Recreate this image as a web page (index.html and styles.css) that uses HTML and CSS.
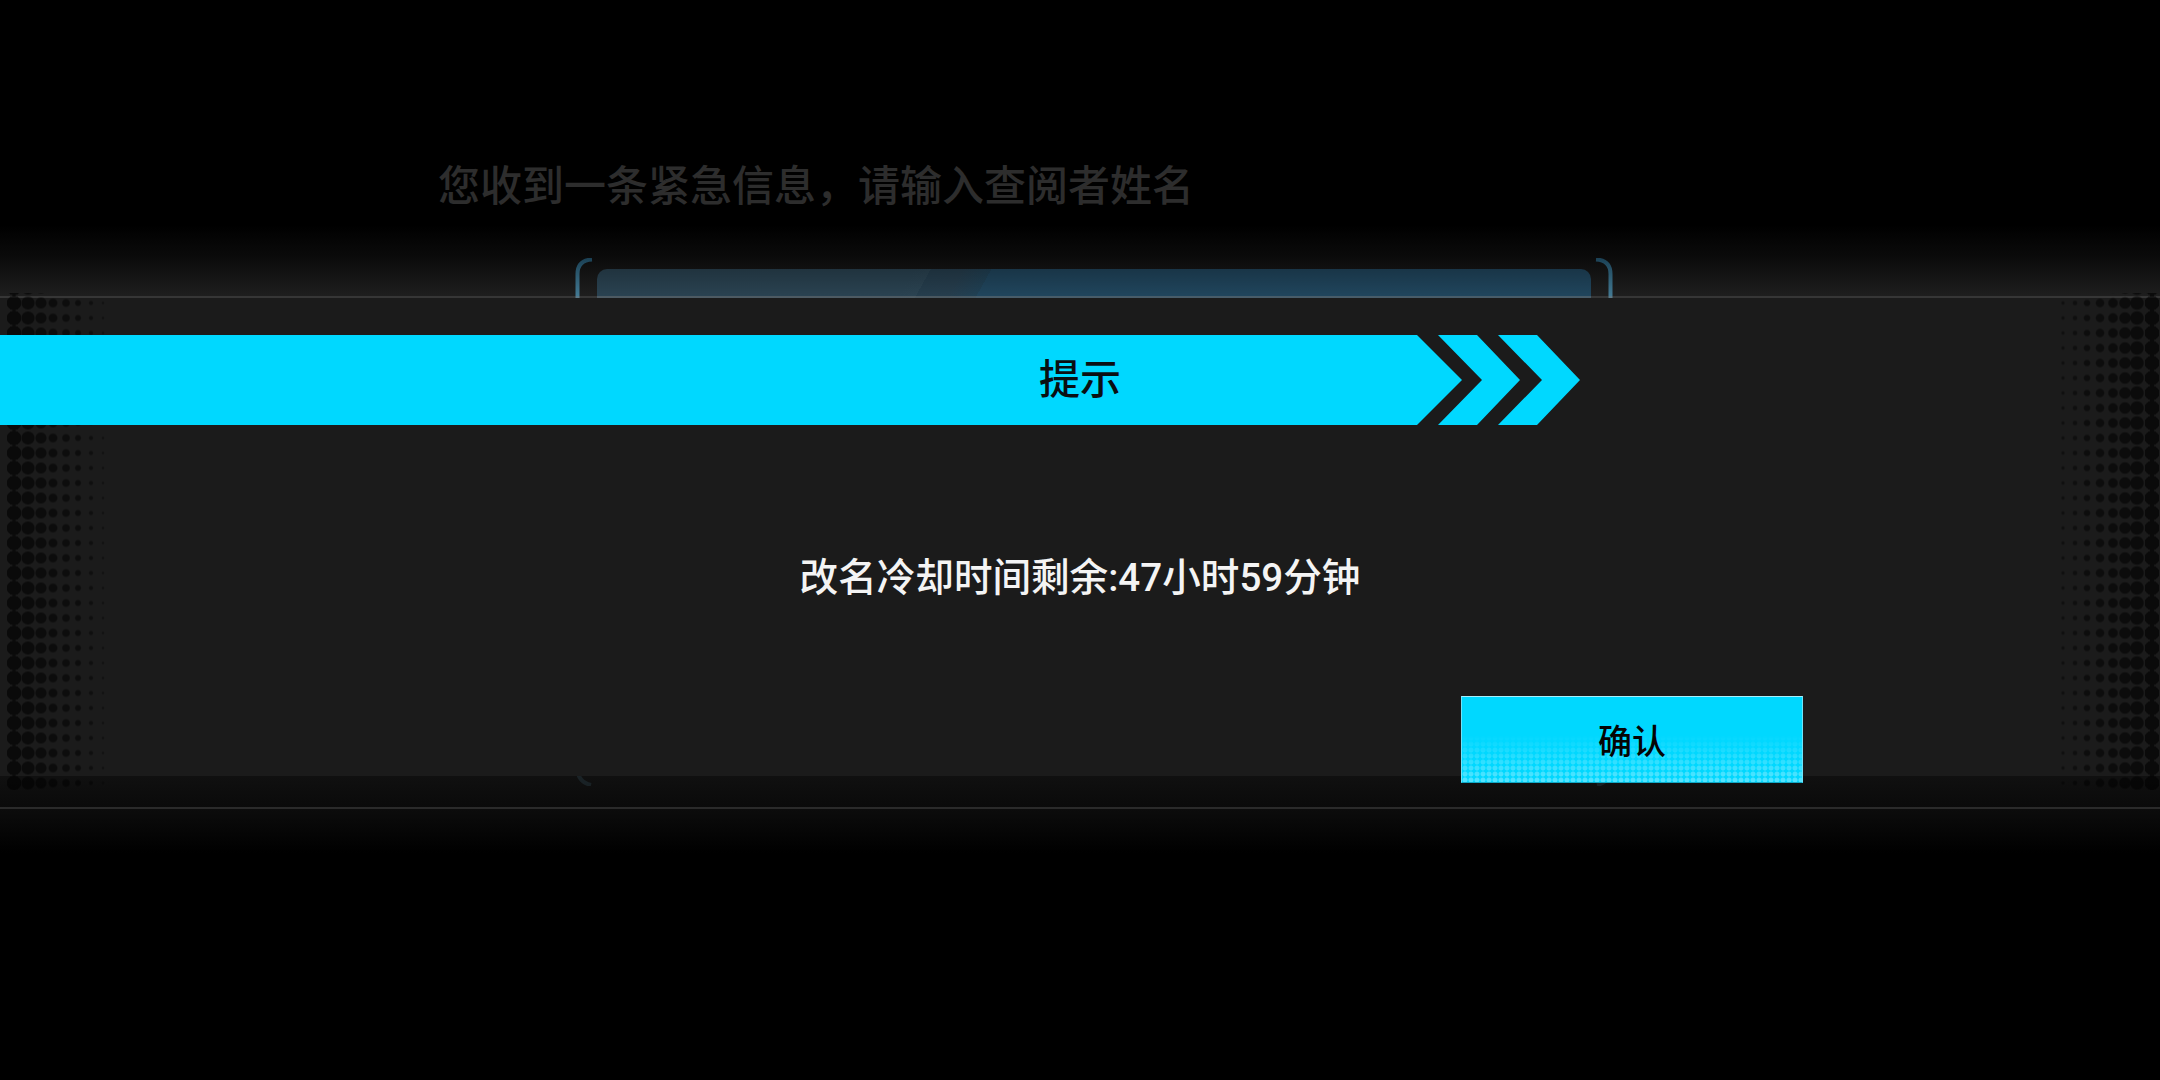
FILE: index.html
```html
<!DOCTYPE html>
<html lang="zh-CN">
<head>
    <meta charset="UTF-8">
    <meta name="viewport" content="width=device-width, initial-scale=1.0">
    <title>提示</title>
    <link rel="stylesheet" href="styles.css">
</head>
<body>
    <!-- 背后的页面 -->
    <div class="scene">
        <p class="scene-text">您收到一条紧急信息，请输入查阅者姓名</p>
        <div class="frame">
            <svg class="bracket" viewBox="0 0 22 528" aria-hidden="true">
                <defs>
                    <linearGradient id="bracketStroke" gradientUnits="userSpaceOnUse" x1="0" y1="0" x2="0" y2="40">
                        <stop offset="0" stop-color="#1b4155"/>
                        <stop offset="1" stop-color="#447c96"/>
                    </linearGradient>
                </defs>
                <path d="M17 1.5 C7 2 2.5 7 2.5 16 V510 C2.5 519 7 525 16 527" fill="none" stroke="url(#bracketStroke)" stroke-width="4"/>
            </svg>
            <div class="frame-screen"></div>
            <svg class="bracket bracket-right" viewBox="0 0 22 528" aria-hidden="true">
                <path d="M17 1.5 C7 2 2.5 7 2.5 16 V510 C2.5 519 7 525 16 527" fill="none" stroke="url(#bracketStroke)" stroke-width="4"/>
            </svg>
        </div>
    </div>

    <!-- 弹窗 -->
    <div class="dialog">
        <div class="dots dots-left"></div>
        <div class="dots dots-right"></div>
        <div class="dialog-panel">
            <div class="title-bar">
                <svg class="title-arrow" viewBox="0 0 1580 90" aria-hidden="true">
                    <polygon points="0,0 1417,0 1462,45 1417,90 0,90"/>
                    <polygon points="1438,0 1477,0 1520,45 1477,90 1438,90 1482,45"/>
                    <polygon points="1498,0 1537,0 1580,45 1537,90 1498,90 1542,45"/>
                </svg>
                <h1 class="title">提示</h1>
            </div>
            <p class="message">改名冷却时间剩余:47小时59分钟</p>
            <button class="confirm-button">确认</button>
        </div>
        <div class="dialog-foot"></div>
        <div class="dialog-fade"></div>
    </div>
</body>
</html>
```

FILE: styles.css
```css
* {
    margin: 0;
    padding: 0;
    box-sizing: border-box;
}

body {
    width: 2160px;
    height: 1080px;
    overflow: hidden;
    position: relative;
    font-family: Roboto, "Noto Sans CJK SC", sans-serif;
    background-color: #000;
    background-image: linear-gradient(180deg, #000 225px, #0b0b0b 258px, #1e1e1e 296px, #000 296px);
}

.scene {
    padding-top: 157px;
}

.scene-text {
    margin-left: 438px;
    font-size: 42px;
    line-height: 60px;
    font-weight: 500;
    color: #2d2d2d;
}

.frame {
    display: flex;
    width: 1038px;
    height: 528px;
    margin: 41px 0 0 575px;
}

.bracket {
    width: 22px;
    height: 528px;
    flex: none;
}

.bracket-right {
    transform: scaleX(-1);
}

.frame-screen {
    flex: 1;
    height: 500px;
    margin-top: 11px;
    border-radius: 10px 10px 0 0;
    background-image:
        linear-gradient(180deg, rgba(0, 0, 0, 0.25), rgba(0, 0, 0, 0) 30px),
        linear-gradient(119deg, #2b4453 277px, #2c4554 292px, #263f4f 292px, #273f4f 320px, #214256 345px, #21475f 345px);
}

/* 弹窗 */
.dialog {
    position: absolute;
    top: 296px;
    left: 0;
    right: 0;
}

.dialog-panel {
    display: flex;
    flex-direction: column;
    height: 480px;
    border-top: 2px solid rgba(120, 120, 120, 0.45);
    background-color: #1b1b1b;
    background-clip: padding-box;
}

.title-bar {
    position: relative;
    z-index: 2;
    display: flex;
    flex: none;
    justify-content: center;
    align-items: center;
    height: 90px;
    margin-top: 37px;
}

.title-arrow {
    position: absolute;
    top: 0;
    left: 0;
    width: 1580px;
    height: 90px;
    fill: #00d8ff;
}

.title {
    position: relative;
    font-size: 41px;
    line-height: 90px;
    font-weight: 500;
    color: #0a0f12;
}

.message {
    flex: none;
    margin-top: 129px;
    font-size: 38.6px;
    line-height: 48px;
    font-weight: 500;
    text-align: center;
    color: #f4f4f4;
}

.confirm-button {
    position: relative;
    z-index: 2;
    flex: none;
    align-self: flex-end;
    width: 342px;
    height: 87px;
    margin: 94px 357px 0 0;
    font-family: inherit;
    font-size: 34px;
    font-weight: 500;
    color: #050505;
    background-color: #00d8ff;
    border: 1px solid #6fe4fa;
    border-top-color: #a8effc;
    border-bottom-color: #0fa9c6;
    overflow: hidden;
}

.confirm-button::before {
    content: "";
    position: absolute;
    top: 38px;
    left: 0;
    right: 0;
    bottom: 0;
    z-index: -1;
    background-image: radial-gradient(circle at 3px 3px, #bff4ff 2px, rgba(191, 244, 255, 0) 3px);
    background-size: 6px 6px;
    -webkit-mask-image: linear-gradient(180deg, transparent, rgba(0, 0, 0, 0.45));
    mask-image: linear-gradient(180deg, transparent, rgba(0, 0, 0, 0.45));
}

.dialog-foot {
    height: 33px;
    border-bottom: 2px solid #2a2a2a;
    background-image: linear-gradient(180deg, rgba(19, 19, 19, 0.85), rgba(12, 12, 12, 0.85));
    background-clip: padding-box;
}

.dialog-fade {
    height: 44px;
    background-image: linear-gradient(180deg, #0c0c0c, #000);
}

/* 两侧网点 */
.dots {
    position: absolute;
    top: -3px;
    width: 112px;
    height: 497px;
    z-index: 1;
    background-size: 112px 15px;
    background-position: 0 2.5px;
    background-repeat: repeat-y;
    pointer-events: none;
}

.dots-left {
    left: 0;
    background-image:
        radial-gradient(circle at 14px 7.5px, rgba(0, 0, 0, 0.62) 7px, transparent 7.5px),
        radial-gradient(circle at 28px 7.5px, rgba(0, 0, 0, 0.58) 6px, transparent 7px),
        radial-gradient(circle at 41px 7.5px, rgba(0, 0, 0, 0.56) 5px, transparent 6px),
        radial-gradient(circle at 53px 7.5px, rgba(0, 0, 0, 0.54) 3.8px, transparent 5px),
        radial-gradient(circle at 66px 7.5px, rgba(0, 0, 0, 0.52) 3.2px, transparent 4.4px),
        radial-gradient(circle at 78px 7.5px, rgba(0, 0, 0, 0.5) 2.4px, transparent 3.6px),
        radial-gradient(circle at 91px 7.5px, rgba(0, 0, 0, 0.46) 1.4px, transparent 2.6px),
        radial-gradient(circle at 103px 7.5px, rgba(0, 0, 0, 0.38) 0.6px, transparent 1.8px);
}

.dots-right {
    right: 0;
    background-image:
        radial-gradient(circle at 15px 7.5px, rgba(0, 0, 0, 0.42) 1px, transparent 2.2px),
        radial-gradient(circle at 27px 7.5px, rgba(0, 0, 0, 0.46) 1.6px, transparent 2.8px),
        radial-gradient(circle at 39px 7.5px, rgba(0, 0, 0, 0.5) 2.6px, transparent 3.8px),
        radial-gradient(circle at 52px 7.5px, rgba(0, 0, 0, 0.52) 3.6px, transparent 4.8px),
        radial-gradient(circle at 65px 7.5px, rgba(0, 0, 0, 0.54) 4.2px, transparent 5.4px),
        radial-gradient(circle at 77px 7.5px, rgba(0, 0, 0, 0.56) 5.2px, transparent 6.2px),
        radial-gradient(circle at 89px 7.5px, rgba(0, 0, 0, 0.58) 6.2px, transparent 7.2px),
        radial-gradient(circle at 104px 7.5px, rgba(0, 0, 0, 0.62) 7.2px, transparent 7.5px);
}
```
